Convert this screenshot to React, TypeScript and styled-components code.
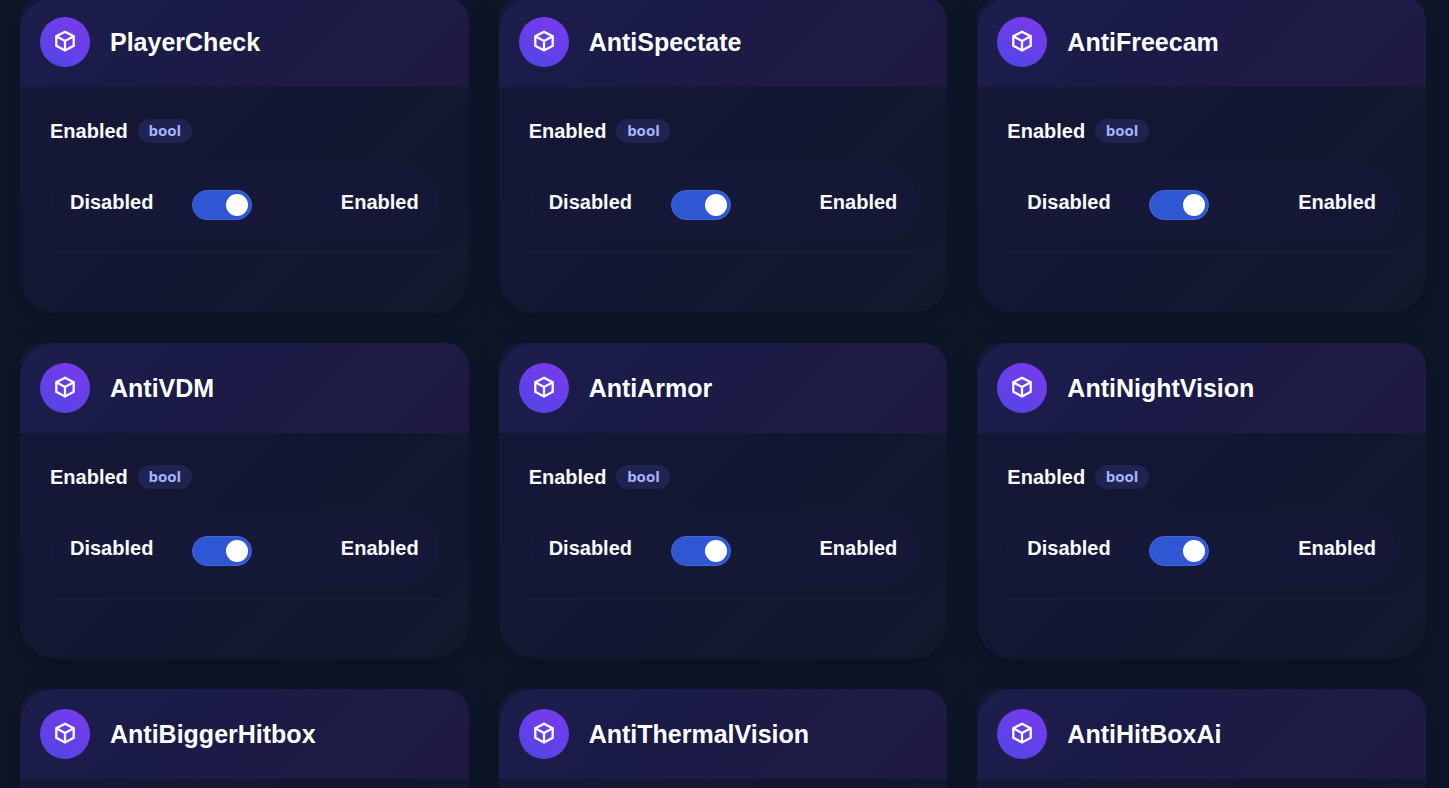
import React from "react";
import styled, { createGlobalStyle } from "styled-components";

const GlobalStyle = createGlobalStyle`
  * { box-sizing: border-box; }
  body {
    margin: 0;
    background: #0e1729;
    color: #f8fafc;
    font-family: "Liberation Sans", Arial, sans-serif;
  }
`;

const Page = styled.main`
  height: 100vh;
  overflow: hidden;
`;

const Grid = styled.div`
  display: grid;
  grid-template-columns: repeat(3, minmax(0, 1fr));
  gap: 30px;
  margin-top: -3px;
  padding: 0 23px 30px 20px;
`;

const Card = styled.section`
  overflow: hidden;
  border-radius: 24px 24px 36px 36px;
  background: linear-gradient(135deg, #171739 0%, #111730 55%, #10192c 100%);
  box-shadow: 0 8px 24px rgba(8, 10, 20, 0.4);
`;

const CardHeader = styled.header`
  display: flex;
  align-items: center;
  gap: 20px;
  padding: 20px;
  border-radius: 36px 24px 0 0;
  background: linear-gradient(135deg, #1d1e4d 0%, #1b1b48 35%, #1e1b45 70%, #1e1a44 100%);
`;

const IconDisc = styled.span`
  display: grid;
  place-items: center;
  width: 50px;
  height: 50px;
  padding-bottom: 2px;
  border-radius: 50%;
  background: linear-gradient(30deg, #4f46e5, #7c3aed);
  color: #ffffff;
`;

const Title = styled.h2`
  margin: 0;
  font-size: 25px;
  line-height: 30px;
  font-weight: 700;
  color: #ffffff;
`;

const CardBody = styled.div`
  padding: 30px 30px 60px;
`;

const Setting = styled.div`
  border-bottom: 1px solid #1b2234;
  padding-bottom: 12px;
`;

const SettingName = styled.div`
  display: flex;
  align-items: center;
  gap: 10px;
  height: 28px;
  margin-bottom: 20px;
  font-size: 20px;
  font-weight: 700;
`;

const TypeBadge = styled.span`
  min-width: 54px;
  padding: 0 10px 2px;
  border-radius: 12px;
  background: #1f2350;
  color: #a5b4fc;
  font-family: "Open Sans", sans-serif;
  font-size: 15px;
  line-height: 22px;
  text-align: center;
`;

const SwitchRow = styled.label`
  display: flex;
  align-items: center;
  justify-content: space-between;
  height: 75px;
  padding: 0 20px;
  border-radius: 38px;
  background: linear-gradient(90deg, #161838, #151736);
  font-size: 20px;
  font-weight: 700;
`;

const Toggle = styled.input`
  appearance: none;
  display: flex;
  align-items: center;
  justify-content: flex-start;
  width: 60px;
  height: 30px;
  margin: 4px 50px 0 0;
  padding: 0 3px;
  border: 1px solid #4565dc;
  border-radius: 15px;
  background: #334155;

  &::before {
    content: "";
    width: 22px;
    height: 22px;
    border-radius: 50%;
    background: #ffffff;
  }

  &:checked {
    justify-content: flex-end;
    background: #2f57d4;
  }
`;

const CubeIcon = () => (
  <svg width="24" height="24" viewBox="0 0 24 24" fill="none" stroke="currentColor" strokeWidth="2.3" aria-hidden="true">
    <path d="M12 2.7 20.7 7.3V16.7L12 21.4 3.3 16.7V7.3Z" />
    <path d="M3.3 7.3 12 12 20.7 7.3M12 12V21.4" />
  </svg>
);

const modules = [
  "PlayerCheck",
  "AntiSpectate",
  "AntiFreecam",
  "AntiVDM",
  "AntiArmor",
  "AntiNightVision",
  "AntiBiggerHitbox",
  "AntiThermalVision",
  "AntiHitBoxAi",
];

const ModuleCard = ({ name }: { name: string }) => (
  <Card>
    <CardHeader>
      <IconDisc>
        <CubeIcon />
      </IconDisc>
      <Title>{name}</Title>
    </CardHeader>
    <CardBody>
      <Setting>
        <SettingName>
          Enabled <TypeBadge>bool</TypeBadge>
        </SettingName>
        <SwitchRow>
          <span>Disabled</span>
          <Toggle type="checkbox" role="switch" defaultChecked />
          <span>Enabled</span>
        </SwitchRow>
      </Setting>
    </CardBody>
  </Card>
);

export default function App() {
  return (
    <>
      <GlobalStyle />
      <Page>
        <Grid>
          {modules.map((name) => (
            <ModuleCard key={name} name={name} />
          ))}
        </Grid>
      </Page>
    </>
  );
}
